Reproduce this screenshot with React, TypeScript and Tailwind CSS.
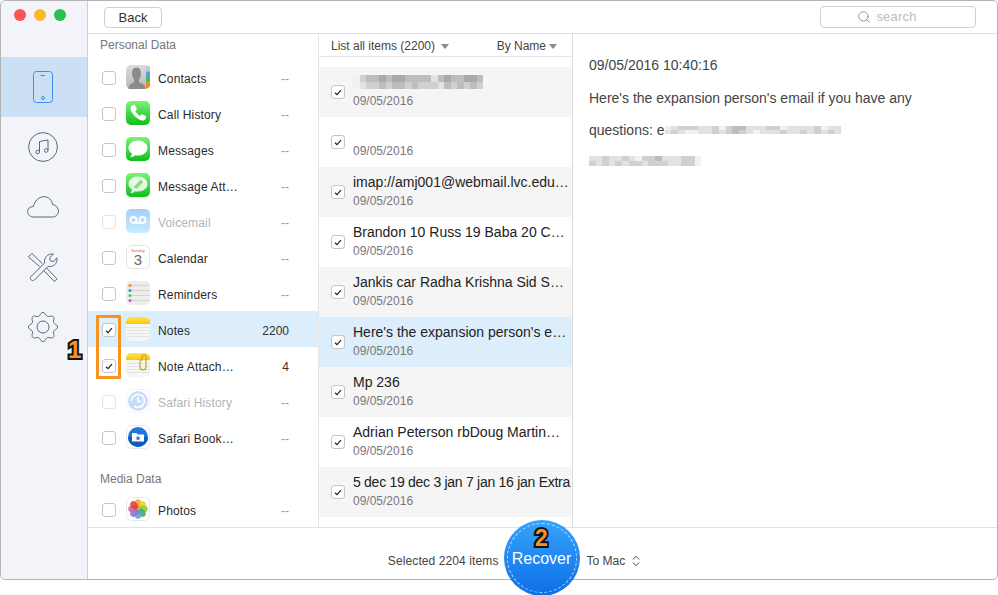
import { ChevronsUpDown, Search } from 'lucide-react';

const personalData = [
  { icon: 'contacts', label: 'Contacts', count: '--' },
  { icon: 'phone', label: 'Call History', count: '--' },
  { icon: 'messages', label: 'Messages', count: '--' },
  { icon: 'attach', label: 'Message Att…', count: '--' },
  { icon: 'voicemail', label: 'Voicemail', count: '--', disabled: true },
  { icon: 'calendar', label: 'Calendar', count: '--' },
  { icon: 'reminders', label: 'Reminders', count: '--' },
  { icon: 'notes', label: 'Notes', count: '2200', checked: true, active: true },
  { icon: 'noteAttach', label: 'Note Attach…', count: '4', checked: true },
  { icon: 'history', label: 'Safari History', count: '--', disabled: true },
  { icon: 'bookmark', label: 'Safari Book…', count: '--' },
];

const notes = [
  { title: '', blurred: true, tone: 'gray' },
  { title: '', tone: 'white' },
  { title: 'imap://amj001@webmail.lvc.edu…', tone: 'gray' },
  { title: 'Brandon 10 Russ 19 Baba 20 C…', tone: 'white' },
  { title: 'Jankis car Radha Krishna Sid S…', tone: 'gray' },
  { title: "Here's the expansion person's e…", tone: 'active' },
  { title: 'Mp 236', tone: 'gray' },
  { title: 'Adrian Peterson rbDoug Martin…', tone: 'white' },
  { title: '5 dec 19 dec 3 jan 7 jan 16 jan Extra', tone: 'gray', tight: true },
];

const shades: Record<string, string> = {
  a: 'bg-[#a9a9a9]',
  b: 'bg-[#bdbdbd]',
  c: 'bg-[#d0d0d0]',
  d: 'bg-[#e2e2e2]',
  e: 'bg-[#f1f1f1]',
};

// pixelated patch where the screenshot hides private text
function Mosaic({ top, bottom, cell }: { top: string; bottom: string; cell: string }) {
  return (
    <div className="flex flex-col blur-[0.5px]">
      {[top, bottom].map((line, i) => (
        <div key={i} className="flex">
          {line.split('').map((c, j) => (
            <div key={j} className={`${cell} ${shades[c]}`} />
          ))}
        </div>
      ))}
    </div>
  );
}

function Checkbox({ checked, disabled }: { checked?: boolean; disabled?: boolean }) {
  return (
    <div
      className={`flex h-[14px] w-[14px] shrink-0 items-center justify-center rounded-[3px] border bg-white ${
        disabled ? 'border-[#e4e4e4]' : 'border-[#c6c6c6]'
      }`}
    >
      {checked && (
        <svg width="8" height="7" viewBox="0 0 8 7" fill="none">
          <path d="M1 3.8 L3 5.6 L7 1.2" stroke="#222" strokeWidth="1.2" />
        </svg>
      )}
    </div>
  );
}

function gearPath() {
  const pts: string[] = [];
  for (let i = 0; i < 96; i++) {
    const t = (i / 96) * Math.PI * 2;
    const r = 13 + 1.6 * Math.cos(8 * t);
    pts.push(`${(15 + r * Math.sin(t)).toFixed(2)} ${(15 - r * Math.cos(t)).toFixed(2)}`);
  }
  return `M${pts.join(' L')} Z`;
}

function Tile({ id, from, to }: { id: string; from: string; to: string }) {
  return (
    <>
      <defs>
        <linearGradient id={id} x1="0" y1="0" x2="0" y2="1">
          <stop offset="0" stopColor={from} />
          <stop offset="1" stopColor={to} />
        </linearGradient>
      </defs>
      <rect width="24" height="24" rx="5" fill={`url(#${id})`} />
    </>
  );
}

function NotePad({ id, clip }: { id: string; clip?: boolean }) {
  return (
    <>
      <defs>
        <linearGradient id={id} x1="0" y1="0" x2="0" y2="1">
          <stop offset="0" stopColor="#ffe25a" />
          <stop offset="1" stopColor="#fdc700" />
        </linearGradient>
      </defs>
      <rect width="24" height="24" rx="5" fill="#f6f6f6" />
      <path d="M0 7 V5 a5 5 0 0 1 5 -5 H19 a5 5 0 0 1 5 5 V7 Z" fill={`url(#${id})`} />
      {[10, 13, 16, 19].map((y) => (
        <rect key={y} y={y} width="24" height="1" fill="#e4e4e4" />
      ))}
      {clip && (
        <path
          d="M17 7 V3 a2 2 0 0 1 4 0 V13 a3 3 0 0 1 -6 0 V5"
          transform="translate(-1 1)"
          fill="none"
          stroke="#c79a16"
          strokeWidth="1.1"
        />
      )}
    </>
  );
}

function AppIcon({ name }: { name: string }) {
  return (
    <svg width="24" height="24" viewBox="0 0 24 24" className="shrink-0">
      {name === 'contacts' && (
        <>
          <Tile id="ct" from="#dcdcdc" to="#b9b9b9" />
          <path
            d="M2.5 24 C2.5 19 6.5 18.5 8 17 V14.5 C6.5 12.5 6 10 6 8 C6 4.5 8 2.5 10.5 2.5 C13 2.5 15 4.5 15 8 C15 10 14.5 12.5 13 14.5 V17 C14.5 18.5 18 19 19 21 V24 Z"
            fill="#8b8b8b"
          />
          <rect x="20" y="1" width="4" height="5.5" fill="#c9c9c9" />
          <rect x="20" y="6.5" width="4" height="5.5" fill="#49a4e6" />
          <rect x="20" y="12" width="4" height="5.5" fill="#58b84f" />
          <path d="M20 17.5 H24 V19 a5 5 0 0 1 -4 5 Z" fill="#ee8a1e" />
        </>
      )}
      {name === 'phone' && (
        <>
          <Tile id="ph" from="#7cf27a" to="#0fbf1a" />
          <path
            d="M6.2 4.5 L8.6 3.6 L11 8 L9.3 9.8 C10 11.8 12.2 14 14.2 14.8 L16 13 L20.4 15.4 L19.6 17.8 C18.8 19.6 17 20 15 19.2 C10.5 17.5 6.5 13.5 4.9 9 C4.2 7 4.6 5.4 6.2 4.5 Z"
            fill="#fff"
          />
        </>
      )}
      {(name === 'messages' || name === 'attach') && (
        <>
          <Tile id={name} from="#7cf27a" to="#0fbf1a" />
          <path
            d="M12 3.5 C17.5 3.5 21.5 6.7 21.5 11 C21.5 15.3 17.5 18.5 12 18.5 C11 18.5 10 18.4 9.2 18.2 C8 19.4 6.2 20.2 4.2 20.2 C5.2 19.2 5.8 18 6 16.6 C3.8 15.2 2.5 13.2 2.5 11 C2.5 6.7 6.5 3.5 12 3.5 Z"
            fill="#fff"
            opacity={name === 'attach' ? 0.85 : 1}
          />
          {name === 'attach' && (
            <path d="M9 14 L15 8 M10.5 14.5 L16 9" stroke="#8fd88b" strokeWidth="2" strokeLinecap="round" />
          )}
        </>
      )}
      {name === 'voicemail' && (
        <>
          <Tile id="vm" from="#76b4fc" to="#a9e3fe" />
          <g fill="none" stroke="#fff" strokeWidth="1.8">
            <circle cx="7.5" cy="11" r="3" />
            <circle cx="16.5" cy="11" r="3" />
            <path d="M7.5 14 H16.5" />
          </g>
        </>
      )}
      {name === 'calendar' && (
        <>
          <rect x="0.5" y="0.5" width="23" height="23" rx="5" fill="#fff" stroke="#e4e4e4" />
          <text x="12" y="6.5" textAnchor="middle" fontSize="4" fill="#e2564c" fontFamily="Liberation Sans, sans-serif">
            Sunday
          </text>
          <text x="12" y="20" textAnchor="middle" fontSize="15" fill="#666" fontFamily="Liberation Sans, sans-serif">
            3
          </text>
        </>
      )}
      {name === 'reminders' && (
        <>
          <rect width="24" height="24" rx="5" fill="#ededed" />
          {[4, 9, 14, 19].map((y) => (
            <rect key={y} x="6" y={y} width="18" height="1" fill="#d2d2d2" />
          ))}
          <circle cx="4" cy="4.5" r="1.6" fill="#f58b1f" />
          <circle cx="4" cy="9.5" r="1.6" fill="#1c9cf0" />
          <circle cx="4" cy="14.5" r="1.6" fill="#58cf3a" />
          <circle cx="4" cy="19.5" r="1.6" fill="#c55ad6" />
        </>
      )}
      {name === 'notes' && <NotePad id="nt" />}
      {name === 'noteAttach' && <NotePad id="na" clip />}
      {name === 'history' && (
        <>
          <rect x="0.5" y="0.5" width="23" height="23" rx="5" fill="#fff" stroke="#eeeeee" />
          <circle cx="12" cy="12" r="10" fill="#a9caf9" />
          <path d="M5.5 12 A6.5 6.5 0 1 1 8 17" fill="none" stroke="#fff" strokeWidth="1.6" />
          <path d="M12 7.5 V12.5 H15.5" fill="none" stroke="#fff" strokeWidth="1.6" />
        </>
      )}
      {name === 'bookmark' && (
        <>
          <rect x="0.5" y="0.5" width="23" height="23" rx="5" fill="#fff" stroke="#e8e8e8" />
          <circle cx="12" cy="12" r="10" fill="#1f78d8" />
          <path d="M2 12 a10 10 0 0 0 20 0 Z" fill="#0f5bb8" />
          <path d="M6 8 H10.5 L12 9.5 H18 V16.5 H6 Z" fill="#fff" />
          <path d="M12 10.5 L12.8 12.3 L14.6 12.5 L13.2 13.7 L13.6 15.4 L12 14.5 L10.4 15.4 L10.8 13.7 L9.4 12.5 L11.2 12.3 Z" fill="#1f78d8" />
        </>
      )}
      {name === 'photos' && (
        <>
          <rect x="0.5" y="0.5" width="23" height="23" rx="5" fill="#fff" stroke="#e8e8e8" />
          {[
            ['#f6a623', 0],
            ['#f2d21b', 45],
            ['#8ccb3f', 90],
            ['#4aa86b', 135],
            ['#5aa5d8', 180],
            ['#8a78c8', 225],
            ['#c66aa8', 270],
            ['#e8403c', 315],
          ].map(([color, angle]) => (
            <ellipse
              key={angle as number}
              cx="12"
              cy="6.8"
              rx="3.4"
              ry="4.6"
              fill={color as string}
              opacity="0.9"
              transform={`rotate(${angle} 12 12)`}
            />
          ))}
        </>
      )}
    </svg>
  );
}

function NavIcon({ name }: { name: string }) {
  const stroke = '#5f6672';
  if (name === 'phone') {
    return (
      <svg width="20" height="33" viewBox="0 0 20 33" fill="none" stroke="#3a8ff0">
        <rect x="0.5" y="0.5" width="19" height="31" rx="3" />
        <path d="M7.5 4.5 H12" />
        <circle cx="10" cy="27" r="1.5" />
      </svg>
    );
  }
  if (name === 'music') {
    return (
      <svg width="30" height="30" viewBox="0 0 30 30" fill="none" stroke={stroke}>
        <circle cx="15" cy="15" r="14.4" />
        <path d="M11.5 20 V9.5 L20 8 V18.5" />
        <circle cx="9.7" cy="20" r="1.8" />
        <circle cx="18.2" cy="18.5" r="1.8" />
      </svg>
    );
  }
  if (name === 'cloud') {
    return (
      <svg width="32" height="22" viewBox="0 0 32 22" fill="none" stroke={stroke}>
        <path d="M7 21 C3 21 .6 18.6 .6 15.6 C.6 12.6 3 10.4 6.4 10.6 C7.4 5 12 .7 17 .7 C21.6 .7 25 4 25.6 8.6 C29 9 31.4 11.8 31.4 15 C31.4 18.4 29 21 25.4 21 Z" />
      </svg>
    );
  }
  if (name === 'tools') {
    return (
      <svg width="31" height="31" viewBox="0 0 31 31" fill="none" stroke={stroke}>
        <path d="M4 24.5 L17.6 10.9 C16.6 6 20.6 1.2 26.4 2 L22.6 6 L23.4 8.8 L26.2 9.6 L30 5.8 C30.8 11.6 26 15.6 21 14.4 L7.4 28 C5.2 30 2 26.8 4 24.5 Z" />
        <path d="M12.6 14.4 L1.4 5 L4.8 1.4 L15.4 11.6" />
        <path d="M16.6 18.6 L25 27 L27.4 29.6 L30 26.8 L27.6 24.4 L19.4 15.8" />
      </svg>
    );
  }
  return (
    <svg width="30" height="30" viewBox="0 0 30 30" fill="none" stroke={stroke}>
      <path d={gearPath()} />
      <circle cx="15" cy="15" r="6" />
    </svg>
  );
}

function Caret() {
  return (
    <svg width="8" height="5" viewBox="0 0 8 5" className="shrink-0">
      <path d="M0 0 H8 L4 5 Z" fill="#8a8a8a" />
    </svg>
  );
}

type Source = { icon: string; label: string; count: string; disabled?: boolean; checked?: boolean; active?: boolean };

function SourceRow({ item }: { item: Source }) {
  return (
    <div className={`flex h-[36px] items-center gap-[10px] pl-[14px] pr-[29px] ${item.active ? 'bg-[#dcedfb]' : ''}`}>
      <div className="pt-[2px]">
        <Checkbox checked={item.checked} disabled={item.disabled} />
      </div>
      <div className="flex flex-1 items-center gap-2">
        <div className={item.disabled ? 'opacity-65' : ''}>
          <AppIcon name={item.icon} />
        </div>
        <span className={`flex-1 whitespace-nowrap pt-[4px] tracking-[0.15px] ${item.disabled ? 'text-[#b4b4b4]' : 'text-[#2a2a2a]'}`}>{item.label}</span>
      </div>
      <span className={`pt-[4px] ${item.count === '--' ? 'text-[#999]' : 'text-[#333]'}`}>{item.count}</span>
    </div>
  );
}

export default function App() {
  return (
    <div className="h-[595px] w-[998px] bg-white text-[12px] font-['Liberation_Sans',Arial,sans-serif]">
      <div className="relative flex h-[580px] rounded-[5px] border border-[#b4b4b4] bg-white">
        {/* Sidebar */}
        <div className="flex w-[87px] shrink-0 flex-col rounded-l-[5px] border-r border-[#cfcfcf] bg-[#f2f4f9]">
          <div className="flex h-[56px] gap-2 pl-[13px] pt-[8px]">
            <div className="h-3 w-3 rounded-full bg-[#f8545a]" />
            <div className="h-3 w-3 rounded-full bg-[#fdb92c]" />
            <div className="h-3 w-3 rounded-full bg-[#27c24c]" />
          </div>
          <div className="flex h-[60px] items-center justify-center bg-[#cbe0f5] pr-[3px]">
            <NavIcon name="phone" />
          </div>
          {['music', 'cloud', 'tools', 'gear'].map((n) => (
            <div key={n} className="flex h-[60px] items-center justify-center pr-[3px]">
              <NavIcon name={n} />
            </div>
          ))}
        </div>

        <div className="flex min-w-0 flex-1 flex-col">
          {/* Toolbar */}
          <div className="flex h-[33px] shrink-0 items-start justify-between border-b border-[#e2e2e2] pl-[16px] pr-[21px] pt-[6px]">
            <button className="h-[21px] w-[58px] rounded-[4px] border border-[#cfcfcf] text-[13px] text-[#333]">Back</button>
            <div className="-mt-px flex h-[22px] w-[156px] items-center justify-center gap-[5px] rounded-[4px] border border-[#cfcfcf] pr-[22px]">
              <Search size={14} strokeWidth={1.3} className="text-[#777]" />
              <span className="text-[13px] tracking-[0.2px] text-[#bbb]">search</span>
            </div>
          </div>

          <div className="flex min-h-0 flex-1">
            {/* Data types */}
            <div className="w-[231px] shrink-0 overflow-hidden border-r border-[#e6e6e6]">
              <div className="flex h-[25px] items-start pl-[12px] pt-[2px] text-[#777]">Personal Data</div>
              {personalData.map((item) => (
                <SourceRow key={item.label} item={item} />
              ))}
              <div className="flex h-[36px] items-end pb-[3px] pl-[12px] text-[#777]">Media Data</div>
              <SourceRow item={{ icon: 'photos', label: 'Photos', count: '--' }} />
            </div>

            {/* Item list */}
            <div className="flex w-[254px] shrink-0 flex-col border-r border-[#dcdcdc]">
              <div className="flex h-[23px] shrink-0 items-start justify-between border-b border-[#e6e6e6] pl-[12px] pr-[15px] pt-[2px] text-[#444]">
                <div className="flex items-center gap-[6px] pt-px">
                  <span>List all items (2200)</span>
                  <Caret />
                </div>
                <div className="flex items-center gap-[3px] pt-px">
                  <span>By Name</span>
                  <Caret />
                </div>
              </div>
              <div className="pt-[10px]">
                {notes.map((note, i) => (
                  <div
                    key={i}
                    className={`flex h-[50px] items-center gap-2 pl-[12px] ${
                      note.tone === 'gray' ? 'bg-[#f5f5f5]' : note.tone === 'active' ? 'bg-[#dcedfb]' : 'bg-white'
                    }`}
                  >
                    <Checkbox checked />
                    <div className="min-w-0 flex-1 pb-[2px]">
                      <div className={`flex h-[20px] items-center whitespace-nowrap text-[14px] text-[#222] ${note.tight ? 'tracking-[-0.28px]' : ''}`}>
                        {note.blurred && <Mosaic top="ecbbabaabbbbdbabbaab" bottom="edccbcbbcbcccdbcbcbc" cell="h-[7px] w-[6.5px]" />}
                        {note.title}
                      </div>
                      <div className="flex h-[18px] items-center text-[#777]">09/05/2016</div>
                    </div>
                  </div>
                ))}
              </div>
            </div>

            {/* Note detail */}
            <div className="min-w-0 flex-1 pl-[16px] pt-[20px] text-[14px] text-[#444]">
              <div className="flex h-[22px] items-center">09/05/2016 10:40:16</div>
              <div className="mt-[11px] flex h-[22px] items-center">Here's the expansion person's email if you have any</div>
              <div className="mt-[10px] flex h-[22px] items-center">
                <span>questions: e</span>
                <Mosaic top="edcccddcecbbdddcceddddcedd" bottom="dcdeeddcdcbcdedddcddcdcdcd" cell="h-[4px] w-[6.8px]" />
              </div>
              <div className="mt-[9px] flex h-[22px] items-center">
                <Mosaic top="ddcddcdeccbdddcce" bottom="cdcdcdccdcccddcce" cell="h-[5px] w-[6.6px]" />
              </div>
            </div>
          </div>

          {/* Footer */}
          <div className="flex h-[52px] shrink-0 items-center border-t border-[#e2e2e2] pt-[14px]">
            <div className="flex-1 pr-[6px] text-right tracking-[0.1px] text-[#444]">Selected 2204 items</div>
            <div className="relative w-[76px] shrink-0 self-stretch">
              <div className="absolute -left-px -top-[22px] flex h-[76px] w-[76px] items-center justify-center rounded-full bg-gradient-to-b from-[#36a3fc] to-[#0d6ee6]">
                <div className="absolute inset-[3px] rounded-full border border-dashed border-white/70" />
                <span className="pt-px text-[16px] text-white">Recover</span>
                <span className="absolute left-1/2 top-[3px] -translate-x-1/2 text-[23px] font-bold leading-[30px] text-[#f7931e] [-webkit-text-stroke:4px_#111] [paint-order:stroke_fill]">2</span>
              </div>
            </div>
            <div className="flex flex-1 items-center gap-[4px] pl-[6px] text-[#444]">
              <span>To Mac</span>
              <ChevronsUpDown size={14} strokeWidth={1.7} />
            </div>
          </div>
        </div>

        {/* Callouts */}
        <div className="absolute left-[95px] top-[314px] h-[64px] w-[25px] rounded-[1px] border-[3px] border-[#f7931e]" />
        <span className="absolute left-[67px] top-[334px] text-[24px] font-bold leading-[30px] text-[#f7931e] [-webkit-text-stroke:4px_#111] [paint-order:stroke_fill]">1</span>
      </div>
    </div>
  );
}
